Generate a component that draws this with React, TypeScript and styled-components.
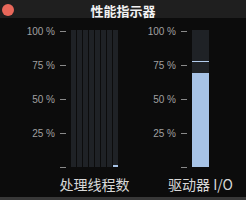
import React from "react";
import styled, { createGlobalStyle } from "styled-components";

const GlobalStyle = createGlobalStyle`
  html, body {
    margin: 0;
    padding: 0;
    background: #0c0c0c;
  }
  body {
    font-family: "Liberation Sans", "Noto Sans CJK SC", sans-serif;
  }
`;

const Window = styled.div`
  width: 246px;
  height: 200px;
  background: #0c0c0c;
  display: flex;
  flex-direction: column;
  overflow: hidden;
`;

const TitleBar = styled.div`
  height: 18px;
  flex: none;
  background: #1f1f1f;
  display: flex;
  align-items: center;
  justify-content: center;
  position: relative;
`;

const CloseDot = styled.span`
  position: absolute;
  left: 2px;
  top: 4px;
  width: 12px;
  height: 12px;
  border-radius: 50%;
  background: #e8675a;
`;

const Title = styled.div`
  color: #f2f2f2;
  font-family: "Noto Sans CJK SC", sans-serif;
  font-weight: 700;
  font-size: 13px;
  line-height: 18px;
  margin-top: 3px;
`;

const Body = styled.div`
  flex: 1;
  display: flex;
  gap: 20px;
  padding: 7px 0 0 17px;
`;

const BottomEdge = styled.div`
  height: 3px;
  flex: none;
  background: #383838;
`;

const Chart = styled.div`
  display: flex;
  gap: 5px;
`;

const Axis = styled.div`
  display: flex;
  flex-direction: column;
  justify-content: space-between;
  height: 149px;
`;

const AxisRow = styled.div`
  height: 13px;
  display: flex;
  align-items: center;
  gap: 5px;
`;

const AxisLabel = styled.span`
  width: 38px;
  text-align: right;
  color: #a0a0a0;
  font-size: 10px;
  line-height: 13px;
`;

const Tick = styled.span`
  width: 6px;
  height: 1px;
  background: #8a8a8a;
`;

const Column = styled.div<{ $width: number }>`
  width: ${(p) => p.$width}px;
  display: flex;
  flex-direction: column;
  align-items: center;
  margin-top: 5px;
`;

const Bars = styled.div`
  height: 137px;
  align-self: stretch;
  display: flex;
  gap: 1px;
`;

const Bar = styled.div`
  flex: 1;
  background: #1f2226;
  position: relative;
`;

const Fill = styled.div`
  position: absolute;
  left: 0;
  right: 0;
  bottom: 0;
  background: #a7c3e6;
`;

const Marker = styled.div`
  position: absolute;
  left: 0;
  right: 0;
  height: 1px;
  background: #b4cdee;
`;

const Caption = styled.div`
  margin-top: 8px;
  display: flex;
  justify-content: center;
  width: 100%;
  white-space: nowrap;
  color: #d8d8d8;
  font-family: "Noto Sans CJK SC", sans-serif;
  font-size: 14px;
  line-height: 18px;
`;

const labels = ["100 %", "75 %", "50 %", "25 %", ""];

function AxisScale() {
  return (
    <Axis>
      {labels.map((l, i) => (
        <AxisRow key={i}>
          <AxisLabel>{l}</AxisLabel>
          <Tick />
        </AxisRow>
      ))}
    </Axis>
  );
}

const threads = [0, 0, 0, 0, 0, 0, 0, 1.2];

export default function App() {
  return (
    <>
      <GlobalStyle />
      <Window>
        <TitleBar>
          <CloseDot />
          <Title>性能指示器</Title>
        </TitleBar>
        <Body>
          <Chart>
            <AxisScale />
            <Column $width={47}>
              <Bars>
                {threads.map((v, i) => (
                  <Bar key={i}>
                    {v > 0 && <Fill style={{ height: `${v}%` }} />}
                  </Bar>
                ))}
              </Bars>
              <Caption>处理线程数</Caption>
            </Column>
          </Chart>
          <Chart>
            <AxisScale />
            <Column $width={17}>
              <Bars>
                <Bar>
                  <Fill style={{ height: "68.6%" }} />
                  <Marker style={{ bottom: "76.6%" }} />
                </Bar>
              </Bars>
              <Caption>驱动器 I/O</Caption>
            </Column>
          </Chart>
        </Body>
        <BottomEdge />
      </Window>
    </>
  );
}
